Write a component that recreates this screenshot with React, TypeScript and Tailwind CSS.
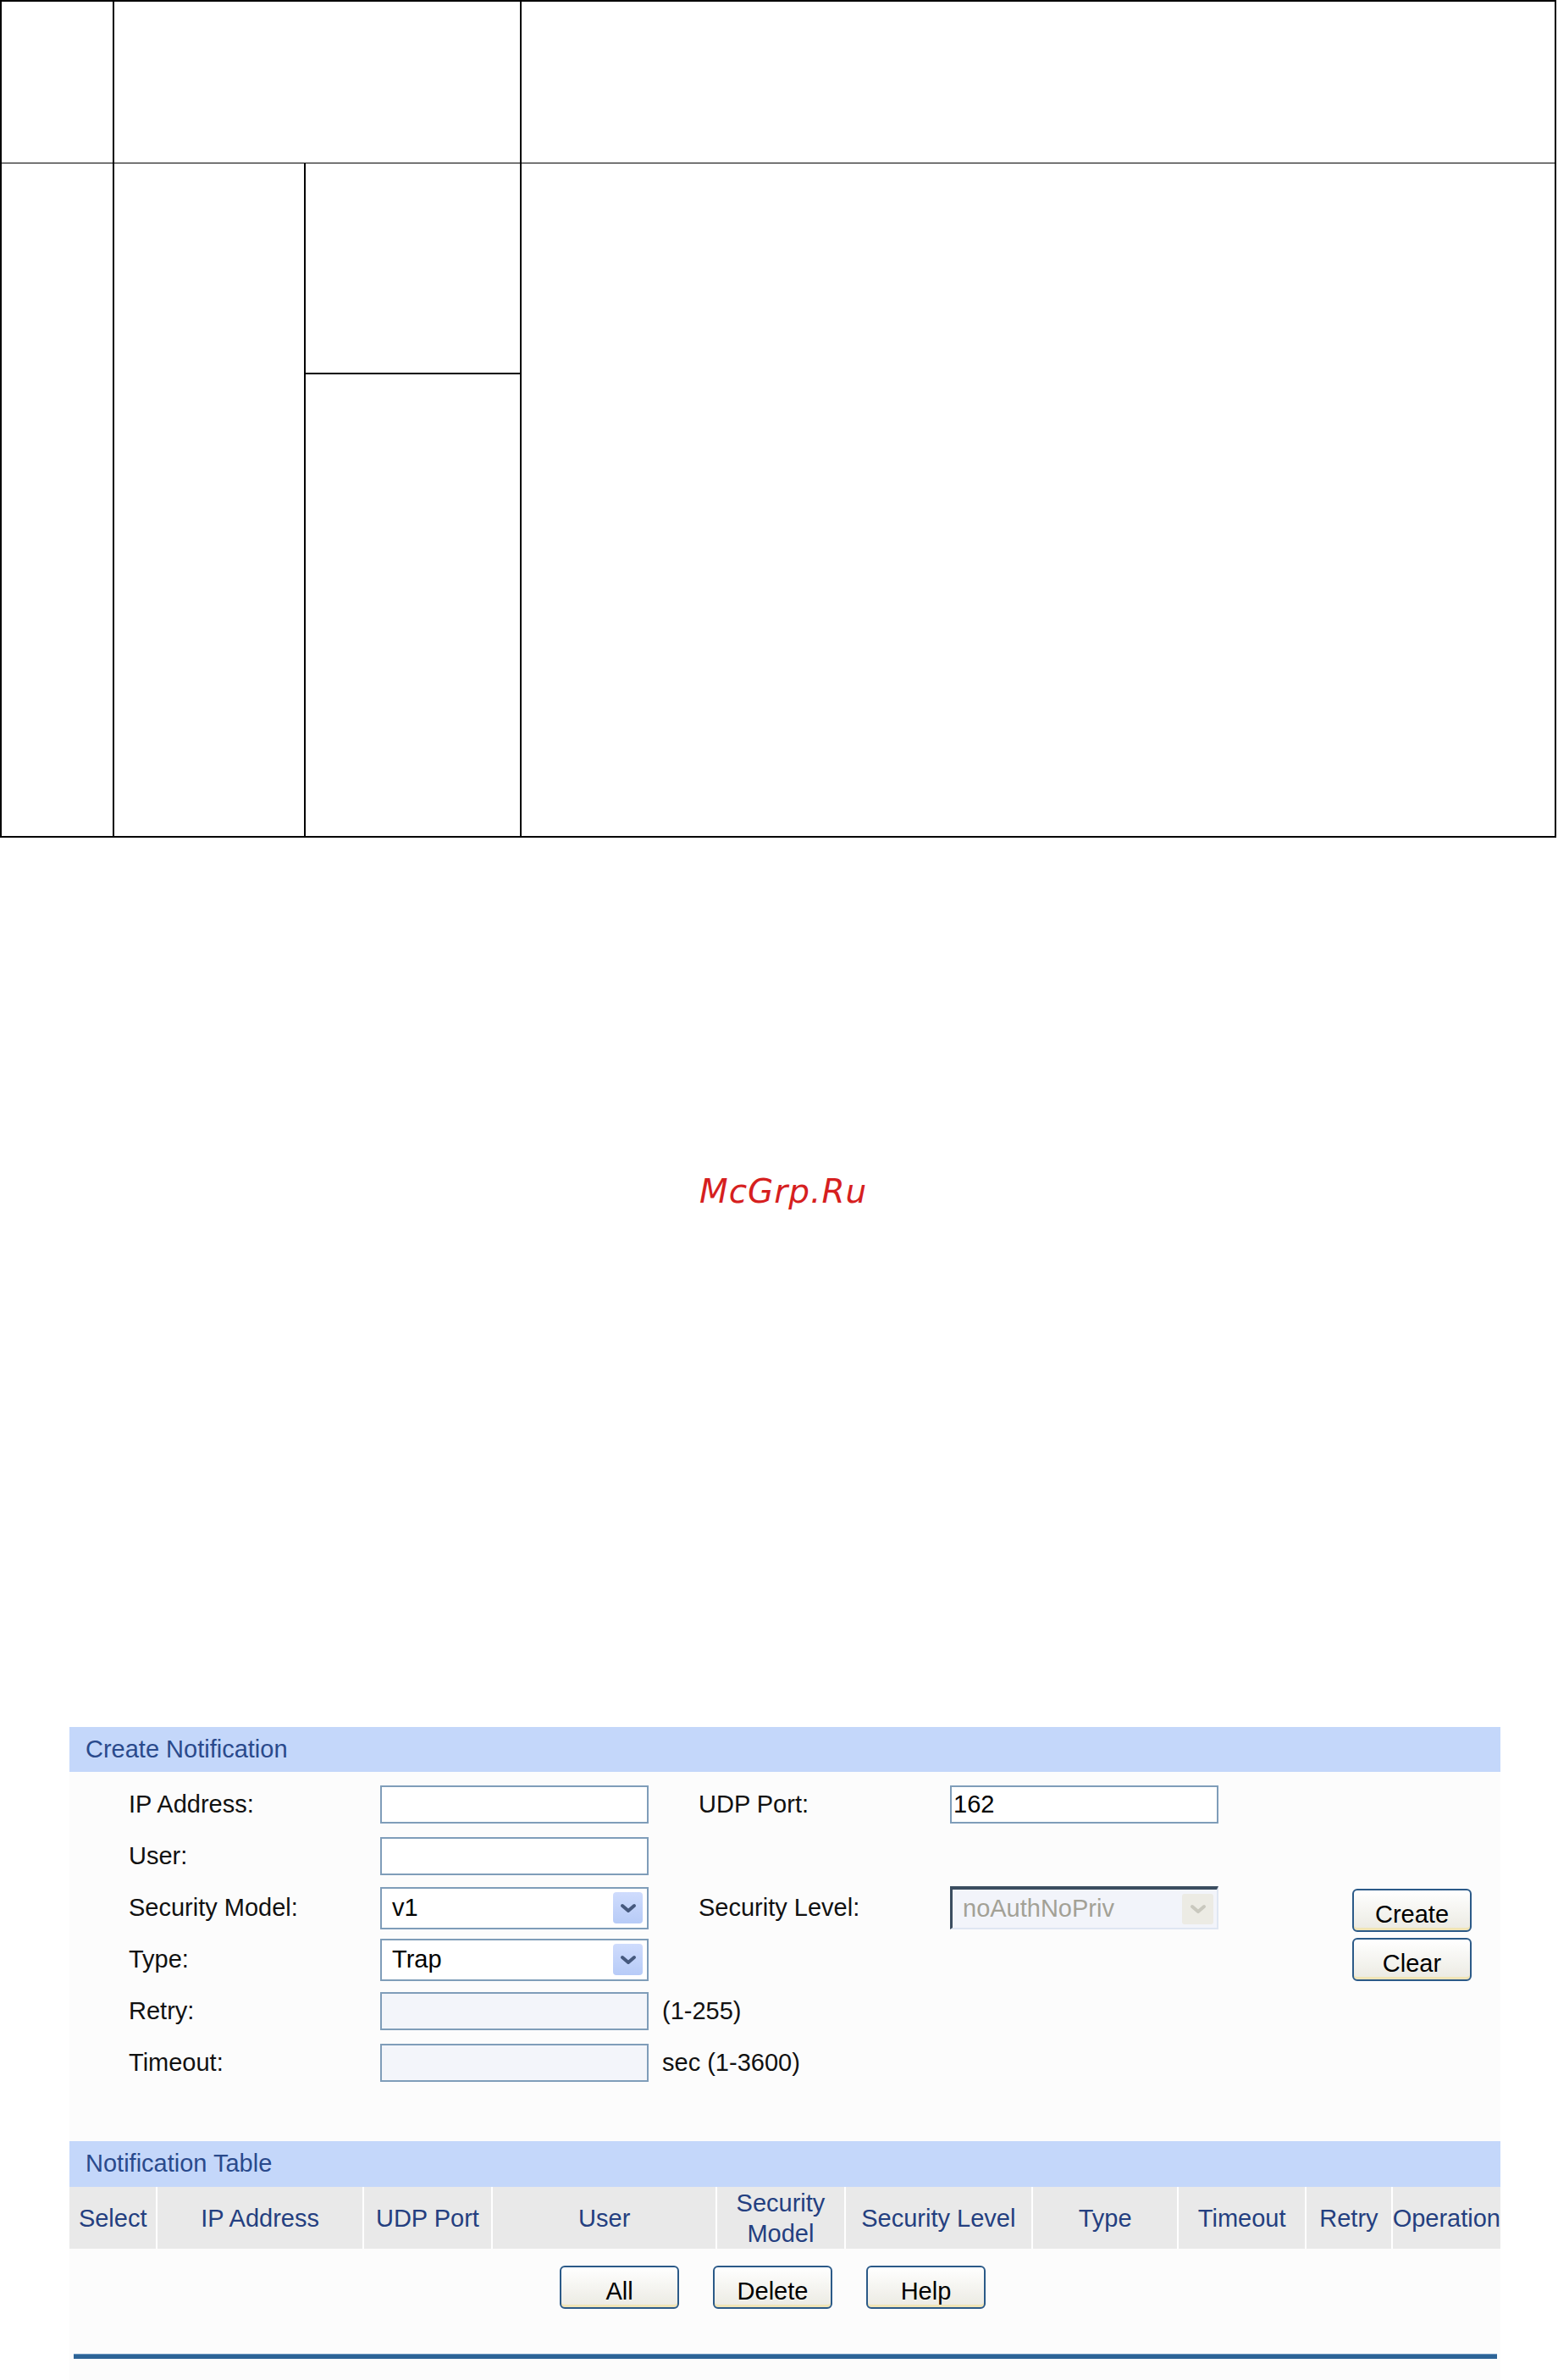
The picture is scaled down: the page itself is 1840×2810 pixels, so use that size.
import React from 'react';

const font = { fontFamily: '"Liberation Sans", Arial, sans-serif' };

function Chevron({ disabled = false }: { disabled?: boolean }) {
  return (
    <svg width="22" height="14" viewBox="0 0 22 14">
      <polyline
        points="4,4 11,10 18,4"
        fill="none"
        stroke={disabled ? '#c9c8be' : '#46597e'}
        strokeWidth="4"
        strokeLinecap="round"
        strokeLinejoin="round"
      />
    </svg>
  );
}

function TextBox({ value = '', tinted = false }: { value?: string; tinted?: boolean }) {
  return (
    <div
      className={`w-[317px] h-[45px] border-2 border-[#7f9db9] flex items-center pl-[2px] text-[29px] text-black ${
        tinted ? 'bg-[#f3f5fa]' : 'bg-white'
      }`}
    >
      {value}
    </div>
  );
}

function Select({ value }: { value: string }) {
  return (
    <div className="w-[317px] h-[50px] border-2 border-[#7f9db9] bg-white flex items-center justify-between pl-[12px] pr-[5px] text-[29px] text-black">
      <span>{value}</span>
      <span className="w-[35px] h-[37px] rounded-[4px] bg-gradient-to-b from-[#cfdcfd] to-[#b7cbf7] flex items-center justify-center">
        <Chevron />
      </span>
    </div>
  );
}

function DisabledSelect({ value }: { value: string }) {
  return (
    <div className="w-[317px] h-[51px] border-t-4 border-l-[3px] border-r-2 border-b-2 border-t-[#3b4d60] border-l-[#3b4d60] border-r-[#dfe6f2] border-b-[#dfe6f2] bg-[#f2f4fa] flex items-center justify-between pl-[12px] pr-[4px] text-[29px] text-[#a3a196]">
      <span>{value}</span>
      <span className="w-[37px] h-[36px] rounded-[3px] bg-[#ecebe4] flex items-center justify-center">
        <Chevron disabled />
      </span>
    </div>
  );
}

function Button({ label }: { label: string }) {
  return (
    <button className="w-[141px] h-[51px] rounded-[6px] border-2 border-[#2b5a88] bg-gradient-to-b from-white to-[#ebeae2] shadow-[inset_0_-3px_0_#f0e4b6] text-[29px] text-black leading-none pt-[9px]">
      {label}
    </button>
  );
}

function FormRow({
  label,
  field,
  middle,
  second,
}: {
  label: string;
  field: React.ReactNode;
  middle?: React.ReactNode;
  second?: React.ReactNode;
}) {
  return (
    <div className="h-[61px] flex items-center">
      <div className="w-[297px] text-[29px] text-[#111]">{label}</div>
      {field}
      <div className="w-[356px] text-[29px] text-[#111]">{middle}</div>
      {second}
    </div>
  );
}

const columns = [
  { name: 'Select', w: 'w-[103px]' },
  { name: 'IP Address', w: 'w-[243px]' },
  { name: 'UDP Port', w: 'w-[151px]' },
  { name: 'User', w: 'w-[265px]' },
  { name: 'Security\nModel', w: 'w-[150px]' },
  { name: 'Security Level', w: 'w-[221px]' },
  { name: 'Type', w: 'w-[171px]' },
  { name: 'Timeout', w: 'w-[150px]' },
  { name: 'Retry', w: 'w-[100px]' },
  { name: 'Operation', w: 'flex-1' },
];

export default function App() {
  return (
    <div className="w-[1840px] h-[2810px] bg-white flex flex-col" style={font}>
      {/* empty bordered table at top */}
      <div className="w-[1838px] h-[989px] border-2 border-black flex flex-col">
        <div className="h-[191px] flex border-b border-black">
          <div className="w-[133px] border-r-2 border-black" />
          <div className="w-[481px] border-r-2 border-black" />
          <div className="flex-1" />
        </div>
        <div className="flex-1 flex">
          <div className="w-[133px] border-r-2 border-black" />
          <div className="w-[226px] border-r-2 border-black" />
          <div className="w-[255px] border-r-2 border-black flex flex-col">
            <div className="h-[249px] border-b-2 border-black" />
            <div className="flex-1" />
          </div>
          <div className="flex-1" />
        </div>
      </div>

      {/* watermark */}
      <div
        className="mt-[398px] h-[39px] leading-[39px] text-[39px] italic text-[#d61f1f] pl-[826px] tracking-[1px]"
        style={{ fontFamily: '"DejaVu Sans", sans-serif' }}
      >
        McGrp.Ru
      </div>

      {/* device web UI panel */}
      <div className="mt-[613px] ml-[82px] w-[1690px] flex-1 bg-[#fcfcfc] flex flex-col">
        <div className="h-[53px] bg-[#c4d7fa] flex items-center pl-[19px] text-[29px] text-[#2a4a8c]">
          Create Notification
        </div>

        <div className="flex pt-[8px]">
          <div className="flex flex-col pl-[70px]">
            <FormRow
              label="IP Address:"
              field={<TextBox />}
              middle={<span className="pl-[59px]">UDP Port:</span>}
              second={<TextBox value="162" />}
            />
            <FormRow label="User:" field={<TextBox />} />
            <FormRow
              label="Security Model:"
              field={<Select value="v1" />}
              middle={<span className="pl-[59px]">Security Level:</span>}
              second={<DisabledSelect value="noAuthNoPriv" />}
            />
            <FormRow label="Type:" field={<Select value="Trap" />} />
            <FormRow label="Retry:" field={<TextBox tinted />} middle={<span className="pl-[16px]">(1-255)</span>} />
            <FormRow label="Timeout:" field={<TextBox tinted />} middle={<span className="pl-[16px]">sec (1-3600)</span>} />
          </div>
          <div className="ml-[158px] pt-[130px] flex flex-col gap-[7px]">
            <Button label="Create" />
            <Button label="Clear" />
          </div>
        </div>

        <div className="mt-[62px] h-[54px] bg-[#c4d7fa] flex items-center pl-[19px] text-[29px] text-[#2a4a8c]">
          Notification Table
        </div>
        <div className="h-[73px] flex gap-[2px] bg-white">
          {columns.map((c) => (
            <div
              key={c.name}
              className={`${c.w} bg-[#e9e9e9] flex items-center justify-center text-center whitespace-pre-line text-[29px] leading-[36px] text-[#243f80]`}
            >
              {c.name}
            </div>
          ))}
        </div>

        <div className="mt-[20px] flex gap-[40px] pl-[579px]">
          <Button label="All" />
          <Button label="Delete" />
          <Button label="Help" />
        </div>

        <div className="mt-[53px] ml-[5px] w-[1681px] h-[6px] bg-[#2d6497] border-t border-[#6d97c0]" />
      </div>
    </div>
  );
}
